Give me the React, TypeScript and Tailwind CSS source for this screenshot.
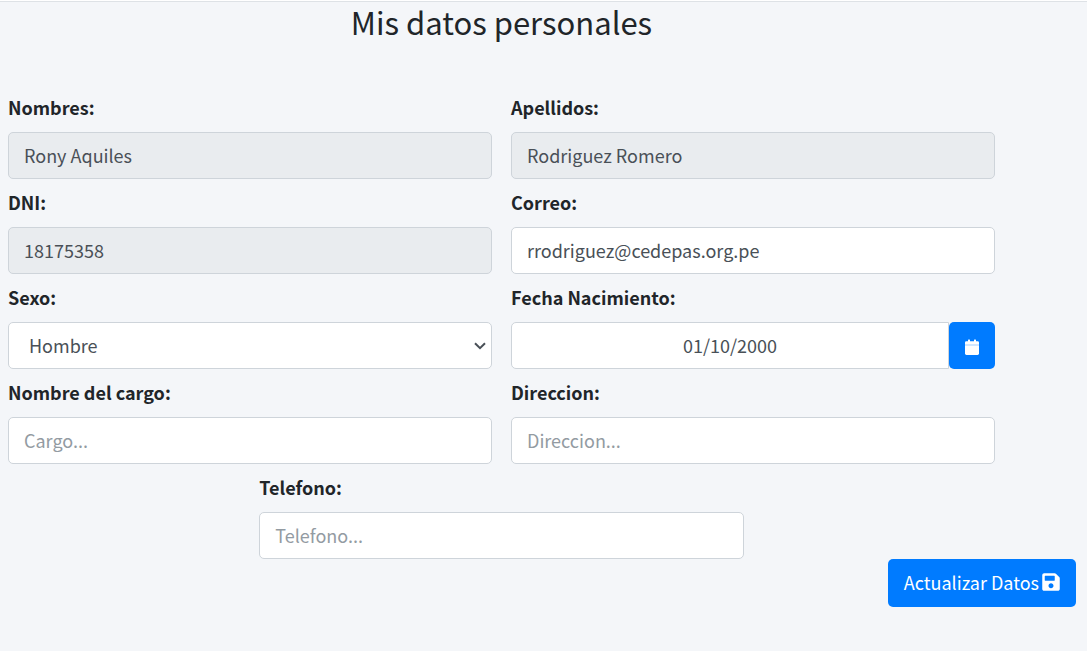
import { useId, type InputHTMLAttributes, type ReactNode } from "react";
import { FaSave } from "react-icons/fa";

const control =
  "block h-[47px] w-full min-w-0 rounded-[5px] border border-[#ced4da] bg-white px-[15px] pb-0.5 text-[18px] leading-7 text-[#495057] outline-none placeholder:text-[#939ba2] placeholder:opacity-100 focus:border-[#80bdff] disabled:bg-[#e9ecef] disabled:opacity-100";

function Field({ id, label, children }: { id: string; label: string; children: ReactNode }) {
  return (
    <div className="flex flex-col gap-3">
      <label htmlFor={id} className="self-start text-[18px] leading-[26px] font-bold">
        {label}
      </label>
      {children}
    </div>
  );
}

function TextField({ label, ...props }: { label: string } & InputHTMLAttributes<HTMLInputElement>) {
  const id = useId();
  return (
    <Field id={id} label={label}>
      <input id={id} type="text" className={control} {...props} />
    </Field>
  );
}

function CalendarIcon() {
  return (
    <svg viewBox="0 0 14 16" className="h-4 w-[14px]" fill="currentColor" aria-hidden="true">
      <path d="M3 2.2V.9Q3 .4 3.5.4H4.5Q5 .4 5 .9V2.2H9V.9Q9 .4 9.500 .4H10.500Q11 .4 11 .9V2.2H12.600Q14 2.200 14 3.600V5H0V3.600Q0 2.200 1.400 2.200Z" />
      <path d="M0 5H14V7H0Z" opacity="0.82" />
      <path d="M0 7H14V14.600Q14 16 12.600 16H1.400Q0 16 0 14.600Z" />
    </svg>
  );
}

export default function App() {
  return (
    <div className="min-h-screen bg-white pt-px font-['Noto_Sans_CJK_SC',sans-serif] text-[#212529]">
      <main className="min-h-[calc(100vh-1px)] border-t border-[#dee2e6] bg-[#f4f6f9] pb-11">
        <form className="flex flex-col" onSubmit={(e) => e.preventDefault()}>
          <div className="mr-[92px] ml-2">
            <h1 className="mb-[52px] text-center text-[31px] leading-10 font-normal">Mis datos personales</h1>
            <div className="grid grid-cols-2 gap-x-[19px] gap-y-[10px]">
              <TextField label="Nombres:" defaultValue="Rony Aquiles" disabled />
              <TextField label="Apellidos:" defaultValue="Rodriguez Romero" disabled />
              <TextField label="DNI:" defaultValue="18175358" disabled />
              <TextField label="Correo:" type="email" defaultValue="rrodriguez@cedepas.org.pe" />
              <Field id="sexo" label="Sexo:">
                <div className="relative">
                  <select id="sexo" defaultValue="Hombre" className={`${control} appearance-none pl-5`}>
                    <option>Hombre</option>
                    <option>Mujer</option>
                  </select>
                  <svg
                    viewBox="0 0 12 8"
                    className="pointer-events-none absolute top-5 right-[6px] h-2 w-3"
                    fill="none"
                    stroke="#495057"
                    strokeWidth="2"
                    aria-hidden="true"
                  >
                    <path d="M1 1.2 6 6.2 11 1.2" />
                  </svg>
                </div>
              </Field>
              <Field id="fecha" label="Fecha Nacimiento:">
                <div className="flex">
                  <input
                    id="fecha"
                    type="text"
                    defaultValue="01/10/2000"
                    className={`${control} flex-1 rounded-r-none text-center`}
                  />
                  <button
                    type="button"
                    aria-label="Elegir fecha"
                    className="flex h-[47px] w-[46px] shrink-0 items-center justify-center rounded-[5px] bg-[#007bff] pt-[3px] text-white"
                  >
                    <CalendarIcon />
                  </button>
                </div>
              </Field>
              <TextField label="Nombre del cargo:" placeholder="Cargo..." />
              <TextField label="Direccion:" placeholder="Direccion..." />
              <div className="col-span-2 flex justify-center">
                <div className="w-[calc(50%-9px)]">
                  <TextField label="Telefono:" type="tel" placeholder="Telefono..." />
                </div>
              </div>
            </div>
          </div>
          <button
            type="submit"
            className="mr-[11px] flex h-12 items-center gap-[3px] self-end rounded-[5px] bg-[#007bff] px-4 pb-0.5 text-[18px] leading-[30px] text-white"
          >
            Actualizar Datos
            <FaSave className="h-5 w-[18px]" />
          </button>
        </form>
      </main>
    </div>
  );
}
